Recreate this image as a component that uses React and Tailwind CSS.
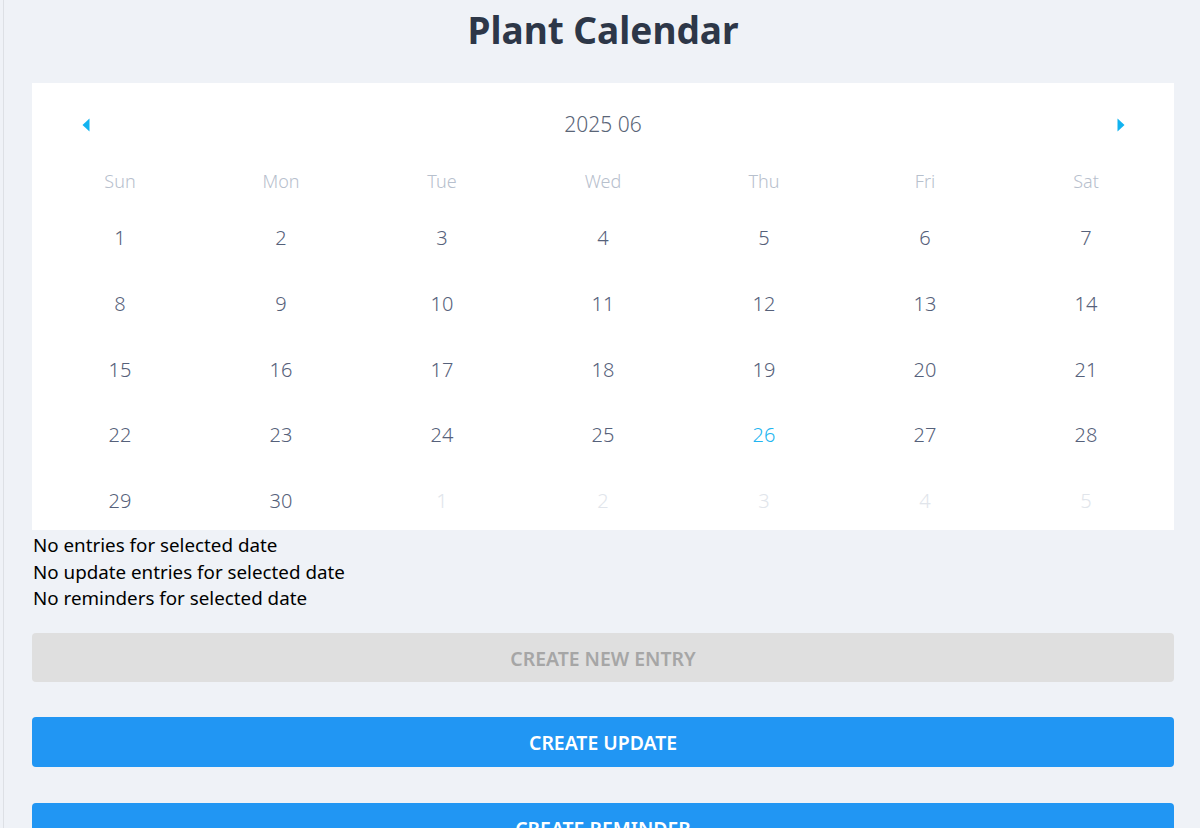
import React from 'react'

const weekdays = ['Sun', 'Mon', 'Tue', 'Wed', 'Thu', 'Fri', 'Sat']

function buildDays() {
  const days = []
  for (let d = 1; d <= 30; d++) days.push({ n: d, muted: false })
  for (let d = 1; d <= 5; d++) days.push({ n: d, muted: true })
  return days
}

function Triangle({ dir }) {
  return (
    <svg width="8" height="14" viewBox="0 0 8 14">
      {dir === 'left' ? (
        <polygon points="7.5,0.5 0.5,7 7.5,13.5" fill="#12b3f0" />
      ) : (
        <polygon points="0.5,0.5 7.5,7 0.5,13.5" fill="#12b3f0" />
      )}
    </svg>
  )
}

export default function App() {
  const days = buildDays()
  const font = { fontFamily: '"Noto Sans", "Open Sans", sans-serif' }

  return (
    <div className="min-h-[828px] bg-[#eff2f7]" style={font}>
      <div className="ml-[3px] min-h-[828px] border-l border-[#dde0e5] pl-[28px] pr-[26px]">
        <h1 className="flex h-[60px] items-center justify-center text-[37px] font-bold text-[#2d3748]">
          Plant Calendar
        </h1>

        <div className="mt-[23px] bg-white px-[7.5px] pt-[22px]">
          <div className="flex h-[40px] items-center justify-between px-[34px]">
            <button className="flex h-6 w-6 items-center justify-center">
              <Triangle dir="left" />
            </button>
            <span className="text-[21px] font-light text-[#5a6577]">2025 06</span>
            <button className="flex h-6 w-6 items-center justify-center">
              <Triangle dir="right" />
            </button>
          </div>

          <div className="mt-[16px] grid h-[40px] grid-cols-7 items-center">
            {weekdays.map((w) => (
              <div key={w} className="text-center text-[18px] font-light text-[#b7c0cd]">
                {w}
              </div>
            ))}
          </div>

          <div className="mt-[8px] grid grid-cols-7 gap-y-[7.75px]">
            {days.map((d, i) => (
              <div
                key={i}
                className={
                  'flex h-[58px] items-center justify-center text-[20px] font-light ' +
                  (d.muted
                    ? 'text-[#e1e5eb]'
                    : d.n === 26
                      ? 'text-[#22b5f0]'
                      : 'text-[#56617a]')
                }
              >
                {d.n}
              </div>
            ))}
          </div>
        </div>

        <div className="mt-[2px] pl-[1px] text-[18.8px] leading-[26.5px] text-black">
          <p>No entries for selected date</p>
          <p>No update entries for selected date</p>
          <p>No reminders for selected date</p>
        </div>

        <div className="mt-[21px] flex flex-col">
          <button className="h-[49px] w-full rounded-[4px] bg-[#dfdfdf] pt-[3px] text-[19.4px] font-semibold text-[#a6a6a6]">
            CREATE NEW ENTRY
          </button>
          <button className="mt-[35px] h-[50px] w-full rounded-[4px] bg-[#2196f3] pt-[2px] text-[19.4px] font-semibold text-white">
            CREATE UPDATE
          </button>
          <button className="mt-[36px] h-[50px] w-full rounded-[4px] bg-[#2196f3] pt-[2px] text-[19.4px] font-semibold text-white">
            CREATE REMINDER
          </button>
        </div>
      </div>
    </div>
  )
}
